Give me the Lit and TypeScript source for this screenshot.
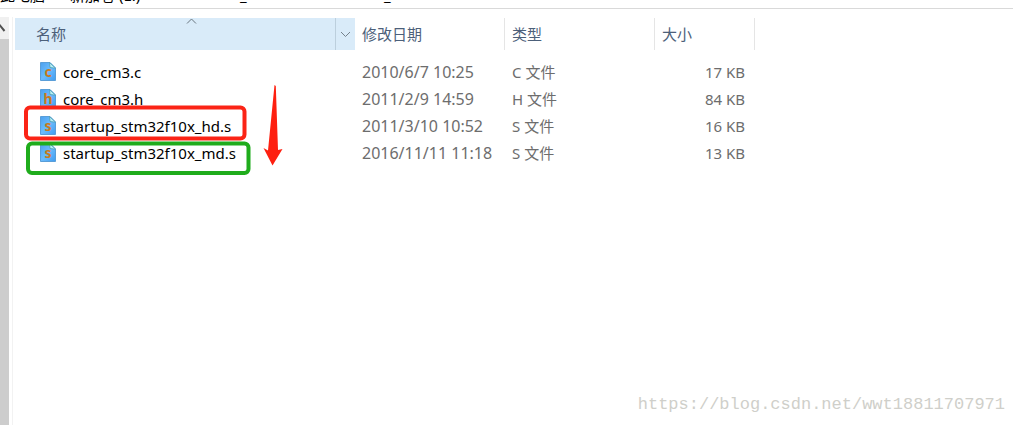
import { LitElement, html, svg, css } from "lit";
import { customElement } from "lit/decorators.js";

interface FileRow {
  name: string;
  glyph: string;
  date: string;
  type: string;
  size: string;
}

const files: FileRow[] = [
  { name: "core_cm3.c", glyph: "c", date: "2010/6/7 10:25", type: "C 文件", size: "17 KB" },
  { name: "core_cm3.h", glyph: "h", date: "2011/2/9 14:59", type: "H 文件", size: "84 KB" },
  { name: "startup_stm32f10x_hd.s", glyph: "s", date: "2011/3/10 10:52", type: "S 文件", size: "16 KB" },
  { name: "startup_stm32f10x_md.s", glyph: "s", date: "2016/11/11 11:18", type: "S 文件", size: "13 KB" },
];

@customElement("file-icon")
export class FileIcon extends LitElement {
  static properties = { glyph: { type: String } };
  declare glyph: string;
  static styles = css`
    :host { display: block; width: 16px; height: 19px; flex: none; }
    svg { display: block; }
    text { font: bold 14px "Noto Sans", sans-serif; fill: #c87a1c; }
  `;
  render() {
    return html`<svg width="16" height="19" viewBox="0 0 16 19" aria-hidden="true">
      ${svg`<defs><linearGradient id="g" x1="0" y1="0" x2="1" y2="1">
        <stop offset="0" stop-color="#4ba0ee"/><stop offset=".5" stop-color="#6cbcfc"/><stop offset="1" stop-color="#3f9cf0"/>
      </linearGradient></defs>
      <path d="M.5 .5H10L15.500 6V18.500H.5Z" fill="url(#g)" stroke="#5a9ed8"/>
      <path d="M9.500 .5L15.500 6.200L10 5.500Z" fill="#b8f0f4" stroke="#4c9cb4" stroke-width=".8"/>
      <text x="8" y="15" text-anchor="middle">${this.glyph}</text>`}
    </svg>`;
  }
}

@customElement("app-root")
export class AppRoot extends LitElement {
  static styles = css`
    :host {
      display: block;
      position: relative;
      min-height: 100vh;
      overflow: hidden;
      background: #fff;
      color: #6d6d6d;
      font: 15px/20px "Noto Sans", "Noto Sans CJK SC", sans-serif;
    }
    * { box-sizing: border-box; }
    .address {
      display: flex;
      align-items: flex-end;
      height: 9px;
      padding-bottom: 3px;
      overflow: hidden;
      border-bottom: 1px solid #d9d9d9;
      color: #000;
      white-space: pre;
    }
    .address span { flex: none; height: 20px; }
    .drive { width: 170px; }
    .pc { width: 70px; }
    .folder { width: 144px; }
    .body { display: flex; align-items: stretch; min-height: calc(100vh - 9px); padding-top: 8px; }
    .scroll { flex: none; width: 9px; background: #cdcdcd; }
    .up {
      display: block; width: 9px; height: 22px; padding: 0; border: 0;
      background: #f0f0f0; overflow: hidden;
    }
    .up svg { display: block; }
    .pane { flex: 1; margin-left: 3px; padding: 1px 0 0 2px; border-left: 1px solid #f2f2f2; }
    table { border-collapse: separate; border-spacing: 0; table-layout: fixed; width: 740px; }
    th, td { padding: 0; text-align: left; font-weight: 400; white-space: nowrap; }
    th { height: 32px; padding-left: 7px; color: #4c607a; border-right: 1px solid #e5e5e5; }
    .c-name { width: 340px; }
    .c-mid { width: 150px; }
    .c-size { width: 100px; }
    th.sorted { position: relative; padding: 0; background: #d9ebf9; border-right: 0; }
    .head { display: flex; align-items: stretch; height: 32px; }
    .label { flex: 1; padding: 6px 0 0 21px; }
    .drop {
      width: 20px; padding: 0; border: 0; border-left: 1px solid #bccfdd;
      background: none; display: grid; place-items: center;
    }
    .caret { position: absolute; left: 171px; top: 0; }
    .gap td { height: 8px; }
    td { height: 27px; padding-left: 7px; font-size: 16px; }
    td.type { font-size: 15px; }
    td.size { padding: 0 10px 0 0; text-align: right; font-size: 15px; }
    td.name { padding: 0 0 0 25px; }
    .file { display: flex; align-items: center; gap: 7px; color: #000; font-size: 15px; text-decoration: none; }
    .marks { position: absolute; left: 20px; top: 80px; pointer-events: none; }
    .watermark {
      position: absolute; right: 8px; bottom: 9px;
      color: #cfcfca; font: 17px/22px "Liberation Mono", monospace;
    }
  `;

  render() {
    return html`
      <div class="address">
        <span class="pc">此电脑</span><span class="drive">新加卷 (E:)</span><span class="folder">_</span><span>_</span>
      </div>
      <div class="body">
        <div class="scroll">
          <button class="up" aria-label="向上滚动">
            <svg width="9" height="22" viewBox="0 0 9 22"><path d="M-5 14L0 8.500L4.500 14" fill="none" stroke="#505050" stroke-width="2"/></svg>
          </button>
        </div>
        <div class="pane">
          <table>
            <colgroup><col class="c-name" /><col class="c-mid" /><col class="c-mid" /><col class="c-size" /></colgroup>
            <thead>
              <tr>
                <th class="sorted" aria-sort="ascending">
                  <svg class="caret" width="11" height="7" viewBox="0 0 11 7"><path d="M1 5.500L5.500 1L10 5.500" fill="none" stroke="#6a7680"/></svg>
                  <div class="head">
                    <span class="label">名称</span>
                    <button class="drop" aria-label="筛选">
                      <svg width="11" height="7" viewBox="0 0 11 7"><path d="M1 1L5.500 5.500L10 1" fill="none" stroke="#74818c"/></svg>
                    </button>
                  </div>
                </th>
                <th>修改日期</th>
                <th>类型</th>
                <th>大小</th>
              </tr>
            </thead>
            <tbody>
              <tr class="gap"><td colspan="4"></td></tr>
              ${files.map((f) => html`<tr>
                <td class="name"><a class="file" href="#"><file-icon .glyph=${f.glyph}></file-icon>${f.name}</a></td>
                <td>${f.date}</td>
                <td class="type">${f.type}</td>
                <td class="size">${f.size}</td>
              </tr>`)}
            </tbody>
          </table>
        </div>
      </div>
      <svg class="marks" width="270" height="100" viewBox="20 80 270 100" aria-hidden="true">
        <rect x="26" y="107.500" width="218.500" height="31" rx="4" fill="none" stroke="#fb2416" stroke-width="4"/>
        <rect x="28" y="143.500" width="220.500" height="29.500" rx="4" fill="none" stroke="#1fac1c" stroke-width="4"/>
        <path d="M274.500 85L275.800 86L278 150L282.500 149L272.500 165.500L263.500 148L268 150.500Z" fill="#fe2010"/>
      </svg>
      <div class="watermark">https://blog.csdn.net/wwt18811707971</div>
    `;
  }
}
